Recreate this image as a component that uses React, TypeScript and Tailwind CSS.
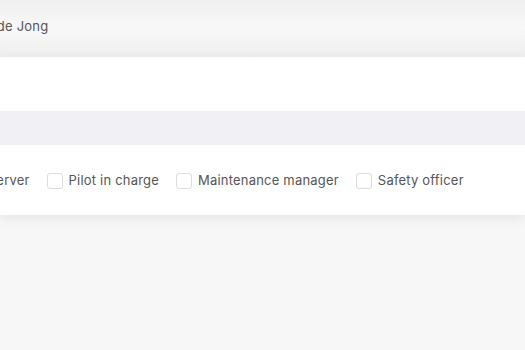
const roles = ["Observer", "Pilot in charge", "Maintenance manager", "Safety officer"];

function RoleCheckbox({ label }: { label: string }) {
  return (
    <label className="flex items-center gap-[6px] shrink-0 whitespace-nowrap">
      <span className="w-4 h-4 rounded-[3px] border border-[#dcdcdc] bg-white" />
      <span className="text-[13px] tracking-[0.2px] text-[#555]">{label}</span>
    </label>
  );
}

export default function App() {
  return (
    <div
      className="w-[525px] h-[350px] overflow-hidden bg-[#f7f7f7]"
      style={{ fontFamily: "Inter, 'Open Sans', sans-serif" }}
    >
      <div className="h-[57px] pb-[4px] flex items-center bg-gradient-to-b from-[#f0f0f0] via-[#f8f8f8] to-[#efefef]">
        <span className="-ml-[30px] text-[13px] tracking-[0.2px] text-[#555] whitespace-nowrap">Jan de Jong</span>
      </div>
      <div className="bg-white shadow-[0_3px_12px_rgba(0,0,0,0.08)]">
        <div className="h-[54px]" />
        <div className="h-[34px] bg-[#f1f1f5]" />
        <div className="h-[70px] pt-[2px] flex items-center gap-[17px] -ml-[51px]">
          {roles.map((r) => (
            <RoleCheckbox key={r} label={r} />
          ))}
        </div>
      </div>
    </div>
  );
}
